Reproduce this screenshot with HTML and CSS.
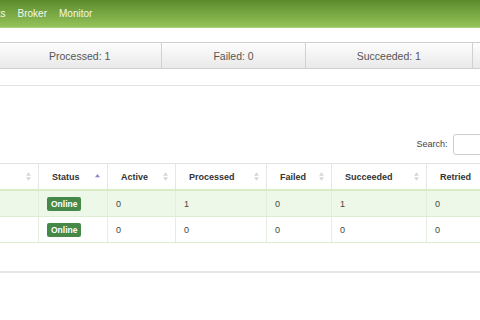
FILE: index.html
```html
<!DOCTYPE html>
<html lang="en">
<head>
  <meta charset="UTF-8">
  <title>Monitor</title>
  <link rel="stylesheet" href="styles.css">
</head>
<body>
  <div class="navbar">
    <a href="#">Tasks</a>
    <a href="#">Broker</a>
    <a href="#">Monitor</a>
  </div>

  <div class="summary">
    <div class="stats">
      <div class="stat">Processed: 1</div>
      <div class="stat">Failed: 0</div>
      <div class="stat">Succeeded: 1</div>
      <div class="stat stat-more"></div>
    </div>
  </div>

  <div class="workers">
    <div class="search">
      <label>Search: <input type="text"></label>
    </div>

    <table class="grid">
      <colgroup>
        <col class="c-name">
        <col class="c-status">
        <col class="c-active">
        <col class="c-processed">
        <col class="c-failed">
        <col class="c-succeeded">
        <col class="c-retried">
      </colgroup>
      <thead>
        <tr>
          <th><div class="th"><span></span><svg class="sort" viewBox="0 0 6 10"><path d="M3 0 L6 4 H0 Z M3 10 L6 6 H0 Z"/></svg></div></th>
          <th><div class="th">Status <svg class="sort asc" viewBox="0 0 6 10"><path d="M3 2 L6 6 H0 Z"/></svg></div></th>
          <th><div class="th">Active <svg class="sort" viewBox="0 0 6 10"><path d="M3 0 L6 4 H0 Z M3 10 L6 6 H0 Z"/></svg></div></th>
          <th><div class="th">Processed <svg class="sort" viewBox="0 0 6 10"><path d="M3 0 L6 4 H0 Z M3 10 L6 6 H0 Z"/></svg></div></th>
          <th><div class="th">Failed <svg class="sort" viewBox="0 0 6 10"><path d="M3 0 L6 4 H0 Z M3 10 L6 6 H0 Z"/></svg></div></th>
          <th><div class="th">Succeeded <svg class="sort" viewBox="0 0 6 10"><path d="M3 0 L6 4 H0 Z M3 10 L6 6 H0 Z"/></svg></div></th>
          <th><div class="th">Retried</div></th>
        </tr>
      </thead>
      <tbody>
        <tr class="odd">
          <td></td>
          <td><span class="label-ok">Online</span></td>
          <td>0</td>
          <td>1</td>
          <td>0</td>
          <td>1</td>
          <td>0</td>
        </tr>
        <tr>
          <td></td>
          <td><span class="label-ok">Online</span></td>
          <td>0</td>
          <td>0</td>
          <td>0</td>
          <td>0</td>
          <td>0</td>
        </tr>
      </tbody>
    </table>
  </div>
</body>
</html>
```

FILE: styles.css
```css
body {
  margin: 0;
  width: 480px;
  overflow: hidden;
  font-family: "Liberation Sans", Arial, sans-serif;
  color: #333;
  background: #fff;
}

.navbar {
  height: 27px;
  display: flex;
  align-items: center;
  gap: 12px;
  margin-left: -20px;
  background: linear-gradient(to bottom, #5b8a2c, #94c35a);
  border-bottom: 1px solid #a8cf78;
}

.navbar a {
  color: #f4f8ee;
  font-size: 10px;
  text-decoration: none;
}

.summary {
  padding: 14px 0 16px;
  border-bottom: 1px solid #e3e3e3;
}

.stats {
  display: flex;
  width: 520px;
  margin-left: -3px;
  height: 25px;
  border: 1px solid #cfcfcf;
  background: linear-gradient(to bottom, #fdfdfd, #e9e9e9);
}

.stat {
  flex: 1 1 auto;
  display: flex;
  align-items: center;
  justify-content: center;
  font-size: 10.5px;
  color: #555;
  border-left: 1px solid #d0d0d0;
}

.stat:first-child {
  border-left: none;
}

.stat-more {
  flex: 0 0 45px;
}

.workers {
  padding-top: 48px;
  padding-bottom: 28px;
  border-bottom: 2px solid #e6e6e6;
}

.search {
  display: flex;
  justify-content: flex-end;
  margin-right: -53px;
  margin-bottom: 8px;
  font-size: 9px;
  color: #444;
}

.search input {
  width: 80px;
  height: 21px;
  margin-left: 3px;
  vertical-align: middle;
  border: 1px solid #ccc;
  border-radius: 3px;
  box-sizing: border-box;
}

.grid {
  table-layout: fixed;
  border-collapse: collapse;
  margin-left: -112px;
  width: 648px;
  font-size: 9px;
}

.c-name { width: 150px; }
.c-status { width: 69px; }
.c-active { width: 68px; }
.c-processed { width: 91px; }
.c-failed { width: 65px; }
.c-succeeded { width: 95px; }
.c-retried { width: 110px; }

.grid th {
  height: 25px;
  padding: 0 7px 0 13px;
  text-align: left;
  font-weight: bold;
  color: #333;
  border-top: 1px solid #e2e2e2;
  border-left: 1px solid #e6e6e6;
  border-bottom: 2px solid #d6ebc6;
}

.th {
  display: flex;
  align-items: center;
  justify-content: space-between;
}

.sort {
  width: 5px;
  height: 9px;
  fill: #d6d6d6;
}

.sort.asc {
  fill: #8888cc;
}

.grid td {
  height: 25px;
  padding: 0 8px;
  color: #444;
  border-left: 1px solid #e4eee0;
  border-bottom: 1px solid #dcedd2;
}

.grid tr.odd td {
  background: #eef8e8;
}

.label-ok {
  display: inline-block;
  padding: 2px 4px;
  font-size: 8.5px;
  font-weight: bold;
  color: #fff;
  background: #468847;
  border-radius: 2px;
}
```
